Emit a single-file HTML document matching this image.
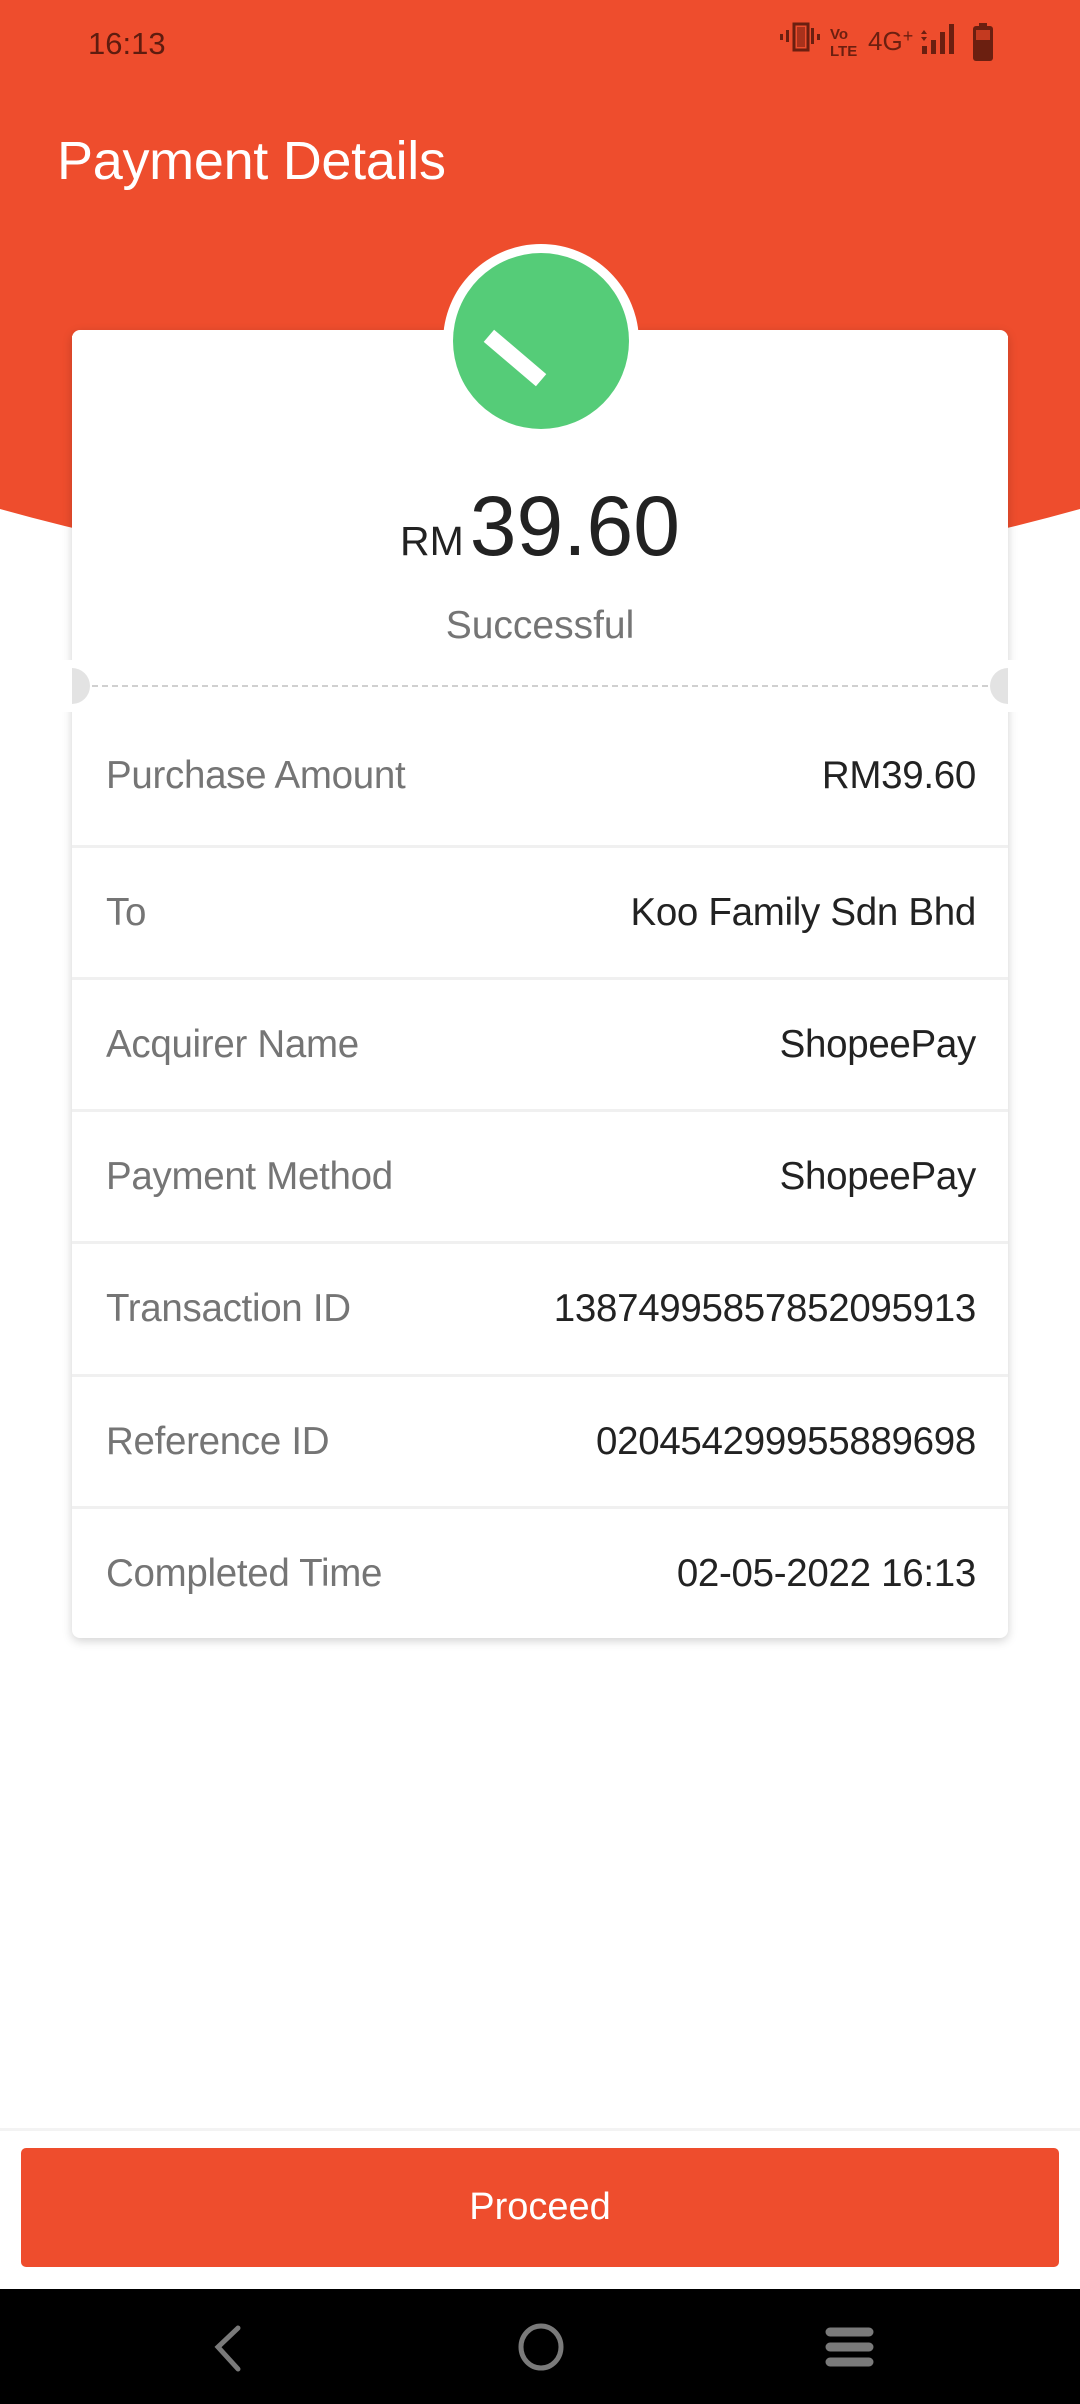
<!DOCTYPE html>
<html><head><meta charset="utf-8"><style>
*{margin:0;padding:0;box-sizing:border-box}
body{width:1080px;height:2404px;position:relative;overflow:hidden;background:#fff;font-family:"Liberation Sans",Roboto,sans-serif}
.abs{position:absolute}
.row{position:absolute;left:72px;width:936px;height:132px;border-top:3px solid #f0f0f0}
.lab{position:absolute;left:34px;top:50%;transform:translateY(-50%);font-size:38.5px;color:#757575;letter-spacing:-0.3px}
.val{position:absolute;right:32px;top:50%;transform:translateY(-50%);font-size:38.5px;color:#222;letter-spacing:-0.3px}
</style></head><body>
<svg class="abs" style="left:0;top:0" width="1080" height="720">
<path d="M0 0H1080V509Q540 660 0 509Z" fill="#EE4D2D"/>
</svg>
<div class="abs" style="left:88px;top:26px;font-size:31px;color:#5e1c0f">16:13</div>
<svg class="abs" style="left:780px;top:22px" width="220" height="44" fill="#6b1f10">
<rect x="6" y="8" width="3" height="12"/><rect x="14" y="2" width="14" height="26" fill="none" stroke="#6b1f10" stroke-width="3"/><rect x="17" y="5" width="8" height="20" fill="#a8321c"/><rect x="31" y="6" width="3" height="16"/><rect x="0" y="12" width="3" height="6"/><rect x="37" y="12" width="3" height="6"/>
<text x="50" y="17" font-size="15" font-weight="bold" font-family="Liberation Sans">Vo</text>
<text x="50" y="34" font-size="15" font-weight="bold" font-family="Liberation Sans">LTE</text>
<text x="88" y="28" font-size="26" font-family="Liberation Sans">4G<tspan font-size="18" dy="-8">+</tspan></text>
<rect x="142" y="24" width="5" height="8"/><rect x="151" y="18" width="5" height="14"/><rect x="160" y="10" width="5" height="22"/><rect x="169" y="2" width="5" height="30"/>
<path d="M141 12l3-4 3 4zM141 15l3 4 3-4z"/>
<rect x="193" y="4" width="20" height="35" rx="3"/><rect x="199" y="1" width="8" height="4"/><rect x="196" y="8" width="14" height="10" fill="#c43a20"/>
</svg>
<div class="abs" style="left:57px;top:130px;font-size:54px;color:#fff;letter-spacing:-0.3px">Payment Details</div>
<div class="abs" style="left:72px;top:330px;width:936px;height:1308px;background:#fff;border-radius:8px;box-shadow:0 3px 10px rgba(0,0,0,.18)"></div>
<div class="abs" style="left:443px;top:244px;width:196px;height:196px;border-radius:50%;background:#fff"></div>
<div class="abs" style="left:72px;top:336px;width:936px;height:120px;background:#fff"></div>
<svg class="abs" style="left:450px;top:250px" width="182" height="182">
<circle cx="91" cy="91" r="88" fill="#55CC78"/>
<line x1="45" y1="91" x2="85" y2="125" stroke="#fff" stroke-width="16" stroke-linecap="square"/>
</svg>
<div class="abs" style="left:0;width:1080px;top:478px;text-align:center;color:#222"><span style="font-size:41px">RM</span><span style="font-size:84px;margin-left:6px">39.60</span></div>
<div class="abs" style="left:0;width:1080px;top:604px;text-align:center;font-size:39px;color:#757575">Successful</div>
<div class="abs" style="left:92px;top:685px;width:896px;border-top:2px dashed #d0d0d0"></div>
<div class="abs" style="left:54px;top:668px;width:36px;height:36px;border-radius:50%;background:#e3e3e3"></div>
<div class="abs" style="left:990px;top:668px;width:36px;height:36px;border-radius:50%;background:#e3e3e3"></div>
<div class="abs" style="left:36px;top:660px;width:36px;height:52px;background:#fff"></div>
<div class="abs" style="left:1008px;top:660px;width:36px;height:52px;background:#fff"></div>
<div class="row" style="top:706px;height:139px;border-top:none"><div class="lab">Purchase Amount</div><div class="val">RM39.60</div></div>
<div class="row" style="top:845px"><div class="lab">To</div><div class="val">Koo Family Sdn Bhd</div></div>
<div class="row" style="top:977px"><div class="lab">Acquirer Name</div><div class="val">ShopeePay</div></div>
<div class="row" style="top:1109px"><div class="lab">Payment Method</div><div class="val">ShopeePay</div></div>
<div class="row" style="top:1241px"><div class="lab">Transaction ID</div><div class="val">13874995857852095913</div></div>
<div class="row" style="top:1374px"><div class="lab">Reference ID</div><div class="val">020454299955889698</div></div>
<div class="row" style="top:1506px"><div class="lab">Completed Time</div><div class="val">02-05-2022 16:13</div></div>
<div class="abs" style="left:0;top:2128px;width:1080px;height:3px;background:#f3f3f3"></div>
<div class="abs" style="left:21px;top:2148px;width:1038px;height:119px;background:#EE4D2D;border-radius:5px;color:#fff;font-size:38px;text-align:center;line-height:119px">Proceed</div>
<div class="abs" style="left:0;top:2289px;width:1080px;height:115px;background:#000"></div>
<svg class="abs" style="left:0;top:2289px" width="1080" height="115" fill="none" stroke="#7a7a7a" stroke-width="5" stroke-linecap="round">
<path d="M238 39L218 58L238 80"/>
<ellipse cx="541" cy="58" rx="20" ry="21"/>
<path d="M830 43h39M830 58h39M830 73h39" stroke-width="9"/>
</svg>
</body></html>
